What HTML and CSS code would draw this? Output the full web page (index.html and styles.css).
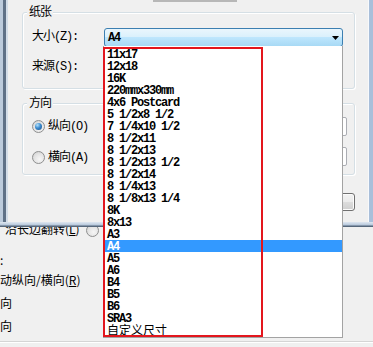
FILE: index.html
```html
<!DOCTYPE html>
<html>
<head>
<meta charset="utf-8">
<title>页面设置</title>
<link rel="stylesheet" href="styles.css">
</head>
<body>
<div class="behind">
  <div class="brow r1"><span class="btxt">沿长边翻转(<u>L</u>)</span><span class="radio small"></span></div>
  <div class="brow r2">:</div>
  <div class="brow r3">动纵向/横向(<u>R</u>)</div>
  <div class="brow r3">向</div>
  <div class="brow r3">向</div>
  <div class="bline"></div>
</div>

<div class="dialog">
  <div class="dlg-main">
    <div class="frame-l"></div>
    <div class="client">
      <div class="topbar"></div>
      <div class="group paper">
        <span class="legend">纸张</span>
        <div class="frow">
          <span class="flabel">大小<span class="lat">(Z):</span></span>
          <div class="combo hot"><span class="lat strong">A4</span><svg class="arrow" width="7" height="4" viewBox="0 0 7 4"><path d="M0 0H7L3.5 4Z" fill="#000"/></svg></div>
        </div>
        <div class="frow">
          <span class="flabel">来源<span class="lat">(S):</span></span>
          <div class="combo"><span class="lat">自动选择</span><svg class="arrow" width="7" height="4" viewBox="0 0 7 4"><path d="M0 0H7L3.5 4Z" fill="#000"/></svg></div>
        </div>
      </div>
      <div class="grow2">
        <div class="group orient">
          <span class="legend">方向</span>
          <div class="rrow"><span class="radio on"></span><span class="rlabel">纵向<span class="lat">(O)</span></span></div>
          <div class="rrow"><span class="radio"></span><span class="rlabel">横向<span class="lat">(A)</span></span></div>
        </div>
        <div class="group margins">
          <span class="legend">页边距</span>
          <div class="mrow"><span class="tb"></span><span class="tb"></span></div>
          <div class="mrow"><span class="tb"></span><span class="tb"></span></div>
        </div>
      </div>
      <div class="btnrow"><span class="btn">打印机(P)...</span></div>
    </div>
    <div class="frame-r"></div>
  </div>
  <div class="frame-b"></div>
</div>

<ul class="dropdown">
  <li>11x17</li>
  <li>12x18</li>
  <li>16K</li>
  <li>220mmx330mm</li>
  <li>4x6 Postcard</li>
  <li>5 1/2x8 1/2</li>
  <li>7 1/4x10 1/2</li>
  <li>8 1/2x11</li>
  <li>8 1/2x13</li>
  <li>8 1/2x13 1/2</li>
  <li>8 1/2x14</li>
  <li>8 1/4x13</li>
  <li>8 1/8x13 1/4</li>
  <li>8K</li>
  <li>8x13</li>
  <li>A3</li>
  <li class="sel">A4</li>
  <li>A5</li>
  <li>A6</li>
  <li>B4</li>
  <li>B5</li>
  <li>B6</li>
  <li>SRA3</li>
  <li class="cjk">自定义尺寸</li>
</ul>
<div class="annot"></div>
</body>
</html>
```

FILE: styles.css
```css
* { box-sizing: border-box; margin: 0; padding: 0; }
html, body { width: 373px; height: 347px; overflow: hidden; }
body {
  background: #f0f0f0;
  font-family: "Noto Sans CJK SC", "Noto Sans", sans-serif;
  font-size: 12px;
  color: #000;
  position: relative;
}

/* window behind the dialog */
.behind { padding-top: 221px; }
.brow { line-height: 16px; white-space: nowrap; display: flex; align-items: flex-start; }
.r1 { height: 31px; padding-left: 5px; }
.r2 { height: 20px; }
.r3 { height: 23px; }
.btxt { display: block; }
.radio.small { margin-left: 6px; margin-top: 3px; }
.bline { border-top: 1px solid #d5d5d5; border-bottom: 1px solid #ffffff; }

/* dialog window */
.dialog { position: absolute; left: 0; top: 0; width: 373px; z-index: 1; }
.dlg-main { display: flex; height: 222px; }
.frame-l {
  width: 8px; flex: none;
  background: linear-gradient(to right, #bccbdc 0, #bccbdc 3px, #5f7187 3px, #5f7187 6px, #d3dde8 6px, #d3dde8 8px);
}
.frame-r {
  width: 5px; flex: none;
  background: linear-gradient(to right, #f7f9fc 0, #f7f9fc 1px, #a9bfda 1px);
}
.frame-b {
  height: 5px;
  background: linear-gradient(#dfe7f0 0, #b7c8dc 60%, #56677b 80%, #56677b 100%);
}
.client {
  flex: 1;
  min-width: 0;
  overflow: hidden;
  background: #f0f0f0;
  padding: 0 13px 0 14px;
  font-size: 12px;
}
.topbar { margin-left: 131px; width: 84px; height: 2px; background: #b7b7b7; }

.group {
  position: relative;
  border: 1px solid #d5dfe5;
  border-radius: 3px;
  box-shadow: inset 1px 1px 0 #ffffff, 1px 1px 0 #ffffff;
}
.legend {
  position: absolute; left: 4px; top: -10px;
  padding: 0 2px; background: #f0f0f0;
  line-height: 16px; letter-spacing: -1px; white-space: nowrap;
}
.lat {
  font-family: "Liberation Mono", monospace;
  font-size: 12px;
  letter-spacing: -1.2px;
}
.lat.strong { font-weight: bold; }

.paper { margin-top: 10px; padding: 15px 0 11px 9px; }
.frow { display: flex; height: 19px; }
.frow + .frow { margin-top: 11px; }
.flabel { width: 72px; flex: none; line-height: 16px; margin-top: -1px; letter-spacing: -1px; white-space: nowrap; }
.combo {
  width: 239px; height: 19px;
  border: 1px solid #3c7fb1; border-radius: 3px;
  background: linear-gradient(#eaf6fd 0%, #d9f0fc 50%, #bee6fd 50%, #a7d9f5 100%);
  display: flex; align-items: center; justify-content: space-between;
  padding: 0 3px 0 3px;
  line-height: 12px;
}
.arrow { display: block; }

.grow2 { display: flex; gap: 10px; margin-top: 14px; }
.orient { width: 148px; flex: none; padding: 14px 0 9px 9px; }
.rrow { display: flex; align-items: center; height: 16px; }
.rrow + .rrow { margin-top: 15px; }
.rlabel { margin-left: 3px; line-height: 16px; letter-spacing: -1px; white-space: nowrap; }
.radio {
  display: block; flex: none;
  width: 13px; height: 13px; border-radius: 50%;
  border: 1px solid #8e8f8f;
  background: radial-gradient(circle at 60% 65%, #f6f6f6 0, #e3e3e3 55%, #c9c9c9 100%);
  position: relative;
}
.radio.on::after {
  content: ""; position: absolute; left: 2px; top: 2px;
  width: 7px; height: 7px; border-radius: 50%;
  background: radial-gradient(circle at 35% 30%, #b4e2fb 0, #3b8bd0 45%, #1c4d80 100%);
}
.margins { flex: 1; min-width: 0; padding: 13px 7px 0 6px; }
.mrow { display: flex; align-items: center; justify-content: flex-end; height: 19px; gap: 30px; }
.mrow + .mrow { margin-top: 11px; }
.tb { width: 50px; height: 19px; border: 1px solid #abadb3; border-radius: 2px; background: #ffffff; }

.btnrow { display: flex; justify-content: flex-end; margin-top: 18px; }
.btn {
  width: 120px; height: 18px;
  border: 1px solid #707070; border-radius: 3px;
  background: linear-gradient(#f2f2f2 0%, #ebebeb 50%, #dddddd 50%, #cfcfcf 100%);
  box-shadow: inset 0 0 0 1px #fcfcfc;
  text-align: center; line-height: 16px; white-space: nowrap;
}

/* open dropdown list */
.dropdown {
  position: absolute; left: 103px; top: 46px;
  width: 240px; height: 292px;
  background: #ffffff;
  border: 1px solid #a3a3a3; border-top: none;
  padding-top: 2px;
  list-style: none;
  z-index: 2;
}
.dropdown li {
  height: 12px; line-height: 14px;
  padding-left: 3px;
  font-family: "Liberation Mono", monospace;
  font-size: 12px; font-weight: bold; letter-spacing: -1.2px;
  white-space: pre;
  color: #000;
}
.dropdown li.sel { background: #3399ff; color: #ffffff; }
.dropdown li.cjk { font-family: "Noto Sans CJK SC", sans-serif; font-size: 12px; font-weight: normal; letter-spacing: 0; line-height: 12px; }

/* red annotation rectangle */
.annot {
  position: absolute; left: 103px; top: 47px;
  width: 160px; height: 290px;
  border: 2px solid #e3161d;
  z-index: 3;
}
```
